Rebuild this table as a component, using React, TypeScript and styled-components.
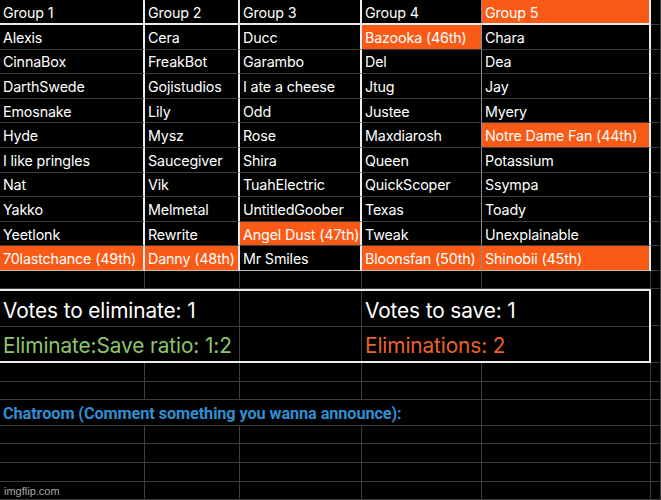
import styled, { createGlobalStyle } from "styled-components";

const GlobalStyle = createGlobalStyle`
    html, body {
        margin: 0;
        padding: 0;
        background: #000000;
        overflow: hidden;
    }
    #root {
        width: 661px;
        height: 500px;
    }
`

const COLUMNS = "145px 95px 122px 120px 169px 1fr";
const GRID = "#3d3d3d";
const WHITE = "#ededed";
const ORANGE = "#f95a16";

interface CellStyle {
    $bg?: string;
    $right?: string;
    $rightWidth?: number;
    $bottom?: string;
    $bottomWidth?: number;
    $span?: number;
    $color?: string;
}

const Sheet = styled.div`
    width: 661px;
    height: 500px;
    background-color: #000000;
    display: flex;
    flex-direction: column;
    overflow: hidden;
    font-family: Inter, "Noto Sans", sans-serif;
    color: #ffffff;
`

const Row = styled.div<{ $h: number }>`
    display: grid;
    grid-template-columns: ${COLUMNS};
    height: ${p => p.$h}px;
    flex-shrink: 0;
`

const Cell = styled.div<CellStyle>`
    box-sizing: border-box;
    grid-column: span ${p => p.$span ?? 1};
    background-color: ${p => p.$bg ?? "transparent"};
    border-right: ${p => p.$rightWidth ?? 1}px solid ${p => p.$right ?? GRID};
    border-bottom: ${p => p.$bottomWidth ?? 1}px solid ${p => p.$bottom ?? GRID};
    color: ${p => p.$color ?? "#ffffff"};
    display: flex;
    align-items: center;
    padding: 1px 3px 0 3px;
    white-space: nowrap;
    overflow: visible;
    min-width: 0;
`

const NameCell = styled(Cell)`
    font-size: 14.3px;
    letter-spacing: -0.15px;
`

const BoxSection = styled.div`
    display: flex;
    height: 74px;
    flex-shrink: 0;
`

const Box = styled.div`
    box-sizing: border-box;
    width: 651px;
    border-top: 2px solid ${WHITE};
    border-bottom: 2px solid ${WHITE};
    border-right: 2px solid ${WHITE};
    display: grid;
    grid-template-columns: 145px 95px 122px 120px 1fr;
    grid-template-rows: 36px 1fr;
`

const BoxCell = styled(Cell)`
    font-size: 20.8px;
    letter-spacing: -0.1px;
    padding: 4px 3px 0 3px;
`

const Filler = styled.div`
    flex: 1;
    display: grid;
    grid-template-rows: 37px 1fr;
`

const Chat = styled(Cell)`
    font-family: Roboto, Inter, sans-serif;
    font-weight: 700;
    font-size: 16.3px;
    letter-spacing: -0.1px;
    color: #2f8fd2;
    padding-top: 2px;
`

const Watermark = styled(Cell)`
    font-family: "Liberation Sans", Arial, sans-serif;
    font-size: 11px;
    color: #a9a9a9;
    padding: 0 0 0 4px;
    align-items: flex-end;
    padding-bottom: 2px;
`

const groups: string[][] = [
    ["Alexis", "CinnaBox", "DarthSwede", "Emosnake", "Hyde", "I like pringles", "Nat", "Yakko", "Yeetlonk", "70lastchance (49th)"],
    ["Cera", "FreakBot", "Gojistudios", "Lily", "Mysz", "Saucegiver", "Vik", "Melmetal", "Rewrite", "Danny (48th)"],
    ["Ducc", "Garambo", "I ate a cheese", "Odd", "Rose", "Shira", "TuahElectric", "UntitledGoober", "Angel Dust (47th)", "Mr Smiles"],
    ["Bazooka (46th)", "Del", "Jtug", "Justee", "Maxdiarosh", "Queen", "QuickScoper", "Texas", "Tweak", "Bloonsfan (50th)"],
    ["Chara", "Dea", "Jay", "Myery", "Notre Dame Fan (44th)", "Potassium", "Ssympa", "Toady", "Unexplainable", "Shinobii (45th)"],
];

// [row, group] of the eliminated ones
const eliminated = ["0-3", "4-4", "8-2", "9-0", "9-1", "9-3", "9-4"];

// divider colour on the right of each group column
const dividers = [WHITE, WHITE, WHITE, "#8e8e8e", WHITE];

function EmptyRow({ h }: { h: number }) {
    return (
        <Row $h={h}>
            {[0, 1, 2, 3, 4, 5].map(i => (
                <Cell key={i} />
            ))}
        </Row>
    )
}

function App() {
    return (
        <>
            <GlobalStyle />
            <Sheet>
                <Row $h={25}>
                    {groups.map((_, i) => (
                        <NameCell key={i} $right={dividers[i]} $rightWidth={i === 3 ? 1 : 2}
                            $bottom={WHITE} $bottomWidth={2} $bg={i === 4 ? ORANGE : undefined}>
                            Group {i + 1}
                        </NameCell>
                    ))}
                    <Cell />
                </Row>
                {groups[0].map((_, r) => (
                    <Row key={r} $h={24.6}>
                        {groups.map((g, i) => (
                            <NameCell key={i} $right={dividers[i]} $rightWidth={i === 3 ? 1 : 2}
                                $bottom={r === 9 ? "#bdbdbd" : GRID}
                                $bg={eliminated.includes(`${r}-${i}`) ? ORANGE : undefined}>
                                {g[r]}
                            </NameCell>
                        ))}
                        <Cell />
                    </Row>
                ))}
                <EmptyRow h={18} />
                <BoxSection>
                    <Box>
                        <BoxCell $span={2}>Votes to eliminate: 1</BoxCell>
                        <BoxCell />
                        <BoxCell $span={2} $right="transparent" $rightWidth={0}>Votes to save: 1</BoxCell>
                        <BoxCell $span={2} $bottomWidth={0} $color="#8cc66c">Eliminate:Save ratio: 1:2</BoxCell>
                        <BoxCell $bottomWidth={0} />
                        <BoxCell $span={2} $bottomWidth={0} $right="transparent" $rightWidth={0} $color="#e9642b">Eliminations: 2</BoxCell>
                    </Box>
                    <Filler>
                        <Cell />
                        <Cell />
                    </Filler>
                </BoxSection>
                <EmptyRow h={19} />
                <EmptyRow h={18} />
                <Row $h={26}>
                    <Chat $span={4}>Chatroom (Comment something you wanna announce):</Chat>
                    <Cell />
                    <Cell />
                </Row>
                <EmptyRow h={18} />
                <EmptyRow h={19} />
                <EmptyRow h={19} />
                <Row $h={18}>
                    <Watermark>imgflip.com</Watermark>
                    <Cell />
                    <Cell />
                    <Cell />
                    <Cell />
                    <Cell />
                </Row>
            </Sheet>
        </>
    )
}

export default App
